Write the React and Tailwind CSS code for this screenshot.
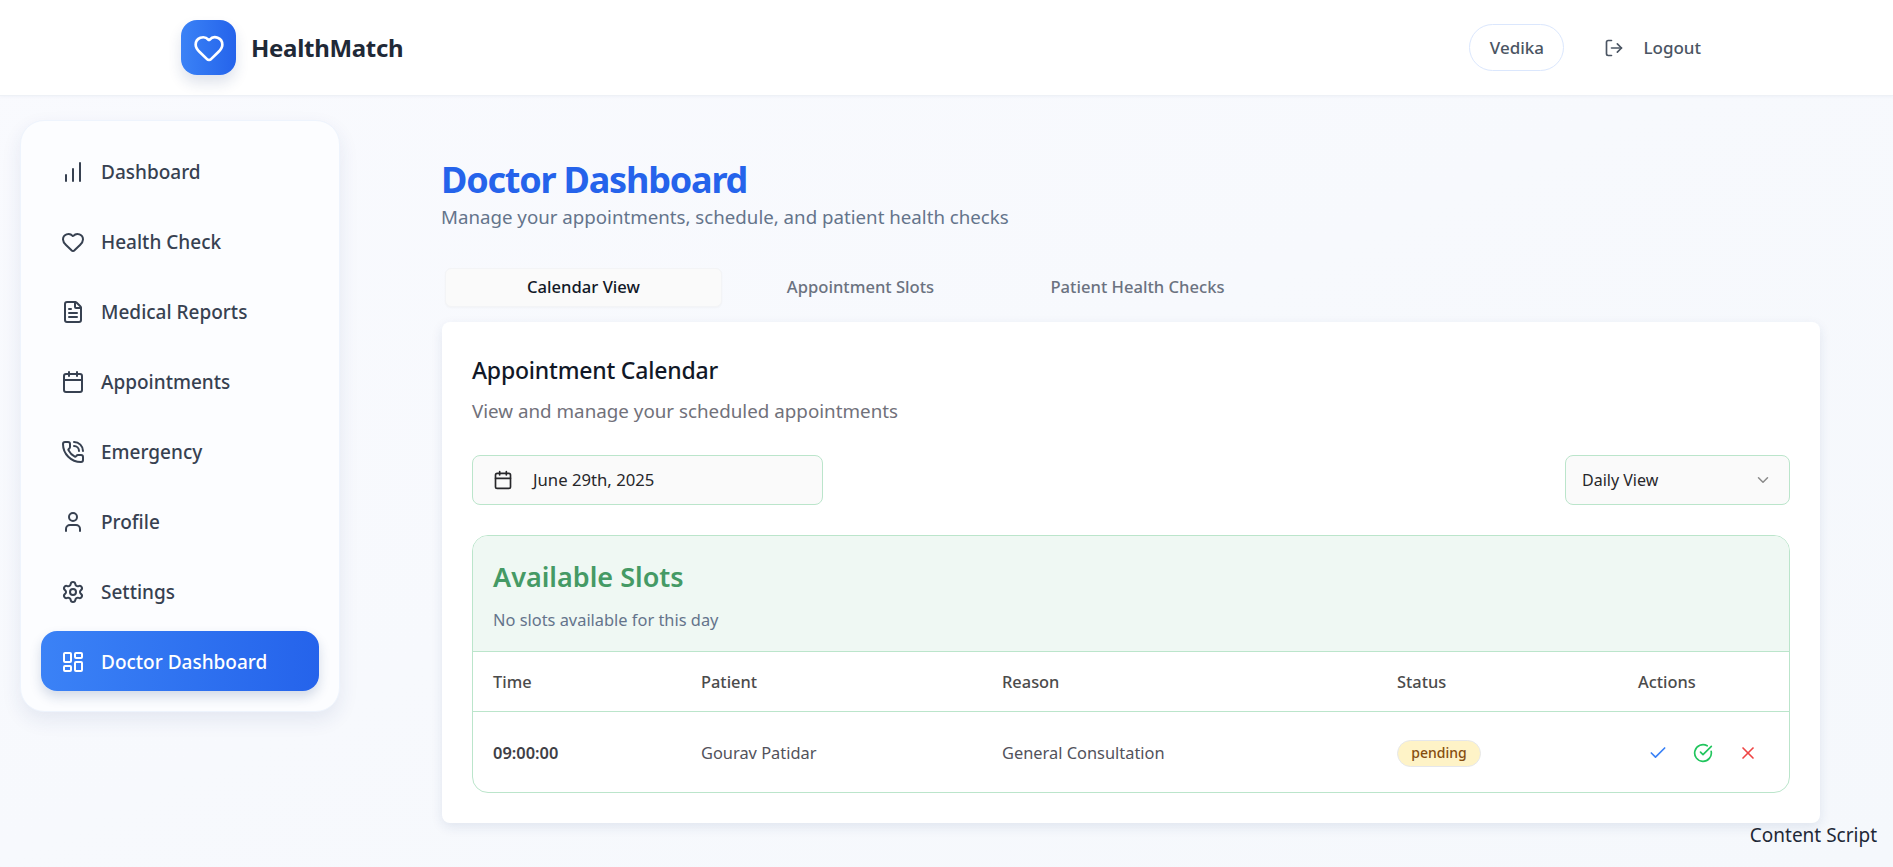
import {
  Calendar,
  ChartNoAxesColumnIncreasing,
  Check,
  ChevronDown,
  CircleCheckBig,
  FileText,
  Heart,
  LayoutDashboard,
  LogOut,
  PhoneCall,
  Settings,
  User,
  X,
} from 'lucide-react'

const navItems = [
  { label: 'Dashboard', icon: ChartNoAxesColumnIncreasing },
  { label: 'Health Check', icon: Heart },
  { label: 'Medical Reports', icon: FileText },
  { label: 'Appointments', icon: Calendar },
  { label: 'Emergency', icon: PhoneCall },
  { label: 'Profile', icon: User },
  { label: 'Settings', icon: Settings },
  { label: 'Doctor Dashboard', icon: LayoutDashboard, active: true },
]

const rowGrid = 'grid grid-cols-[208px_301px_395px_241px_1fr] pl-5 pt-[2px] items-center'

export default function App() {
  return (
    <div className="relative h-[867px] overflow-hidden bg-gradient-to-br from-[#f9fafe] to-[#f5f8fc] font-['Noto_Sans',sans-serif]">
      {/* Header */}
      <header className="flex h-[96px] items-center justify-between border-b border-[#eef1f6] bg-white pl-[181px] pr-[192px] shadow-[0_1px_3px_rgba(30,60,120,0.04)]">
        <div className="flex items-center gap-[15px]">
          <div className="flex h-[55px] w-[55px] items-center justify-center rounded-2xl bg-gradient-to-r from-[#3b82f6] to-[#2563eb] shadow-[0_8px_14px_rgba(30,60,120,0.14)]">
            <Heart className="h-8 w-8 text-white" strokeWidth={2} />
          </div>
          <span className="text-2xl font-bold tracking-[-0.3px] text-[#1f2937]">HealthMatch</span>
        </div>
        <div className="flex items-center gap-10">
          <span className="flex h-[47px] w-[95px] items-center justify-center rounded-full border border-[#dbe7fd] pt-px text-[17px] font-medium text-[#4b5563]">
            Vedika
          </span>
          <button className="flex items-center gap-[19px] pt-px text-[17px] font-medium text-[#4b5563]">
            <LogOut className="h-5 w-5" />
            Logout
          </button>
        </div>
      </header>

      <div className="flex">
        {/* Sidebar */}
        <aside className="ml-5 mt-6 h-[592px] w-[320px] shrink-0 rounded-3xl border border-[#eef4fd] bg-[#fcfdff] px-5 pt-5 shadow-[0_8px_20px_rgba(30,60,120,0.09)]">
          <nav className="flex flex-col gap-2.5">
            {navItems.map((item) => (
              <a
                key={item.label}
                className={`flex h-[60px] items-center gap-4 rounded-2xl px-5 pt-[2px] text-[19px] font-medium ${
                  item.active
                    ? 'bg-gradient-to-r from-[#3b82f6] to-[#2563eb] text-white shadow-[0_6px_12px_rgba(30,60,120,0.18)]'
                    : 'text-[#374151]'
                }`}
              >
                <item.icon className="h-6 w-6 shrink-0" strokeWidth={2} />
                {item.label}
              </a>
            ))}
          </nav>
        </aside>

        {/* Main */}
        <main className="ml-[101px] w-[1379px] pt-[62px]">
          <h1 className="text-[36px] leading-[44px] font-bold tracking-[-1.2px] text-[#2563eb]">Doctor Dashboard</h1>
          <p className="mt-[3px] text-[18.7px] leading-6 text-[#64748b]">
            Manage your appointments, schedule, and patient health checks
          </p>

          <div className="mt-[39px] flex h-[39px] pl-1">
            <button className="w-[277px] rounded-md border border-[#f3f4f6] bg-[#fafafa] text-[16.6px] font-medium text-[#111827] shadow-[0_1px_2px_rgba(0,0,0,0.03)]">
              Calendar View
            </button>
            <button className="w-[277px] text-[16.6px] font-medium text-[#6b7280]">Appointment Slots</button>
            <button className="w-[277px] text-[16.6px] font-medium text-[#6b7280]">Patient Health Checks</button>
          </div>

          {/* Calendar card */}
          <section className="ml-px mt-[15px] h-[501px] rounded-lg bg-white px-[30px] pt-8 shadow-[0_4px_12px_rgba(30,60,120,0.1)]">
            <h2 className="text-[23px] leading-8 font-medium tracking-[-0.2px] text-[#111827]">Appointment Calendar</h2>
            <p className="mt-[11px] text-[18.8px] leading-7 text-[#71717a]">View and manage your scheduled appointments</p>

            <div className="mt-[30px] flex items-center justify-between">
              <button className="flex h-[50px] w-[351px] items-center gap-5 rounded-lg border border-[#bbe5cb] bg-[#fafafa] px-5 text-[16.7px] text-[#27272a]">
                <Calendar className="h-5 w-5" />
                June 29th, 2025
              </button>
              <button className="flex h-[50px] w-[225px] items-center justify-between rounded-lg border border-[#bbe5cb] bg-[#fafafa] pl-4 pr-[17px] text-base text-[#27272a]">
                Daily View
                <ChevronDown className="h-[18px] w-[18px] text-[#8a8a8a]" />
              </button>
            </div>

            <div className="mt-[30px] h-[258px] overflow-hidden rounded-2xl border border-[#bbe5cb]">
              <div className="h-[116px] border-b border-[#bbe5cb] bg-[#eff8f3] px-5 pt-[23px]">
                <h3 className="text-[27px] leading-9 font-semibold text-[#459a65]">Available Slots</h3>
                <p className="mt-[13px] text-[16.4px] leading-6 text-[#64748b]">No slots available for this day</p>
              </div>
              <div className={`${rowGrid} h-[60px] border-b border-[#bbe5cb] text-[16.4px] font-medium text-[#4b4b4b]`}>
                <span>Time</span>
                <span>Patient</span>
                <span>Reason</span>
                <span>Status</span>
                <span>Actions</span>
              </div>
              <div className={`${rowGrid} h-[80px] text-[16.4px] text-[#52525b]`}>
                <span className="font-semibold text-[#3f3f46]">09:00:00</span>
                <span>Gourav Patidar</span>
                <span>General Consultation</span>
                <span>
                  <span className="inline-flex h-[27px] w-[84px] items-center justify-center rounded-full border border-[#e5e7eb] bg-[#fef3c7] text-sm font-medium text-[#854d0e]">
                    pending
                  </span>
                </span>
                <span className="flex items-center gap-[25px] pl-[10px]">
                  <Check className="h-5 w-5 text-[#3b82f6]" />
                  <CircleCheckBig className="h-5 w-5 text-[#22c55e]" />
                  <X className="h-5 w-5 text-[#ef4444]" />
                </span>
              </div>
            </div>
          </section>
        </main>
      </div>

      <div className="absolute bottom-5 right-4 text-[19px] leading-6 text-[#1f2937]">Content Script</div>
    </div>
  )
}
